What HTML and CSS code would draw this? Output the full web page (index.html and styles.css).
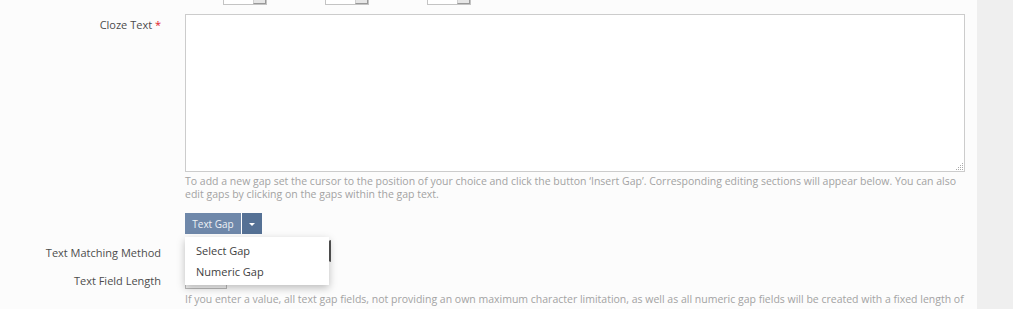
FILE: index.html
```html
<!DOCTYPE html>
<html lang="en">
<head>
    <meta charset="UTF-8">
    <title>Cloze Question</title>
    <link rel="stylesheet" href="styles.css">
</head>
<body>
    <div class="page">
        <div class="main">
            <form class="form">
                <div class="form-row top-row">
                    <label class="form-label">Scoring</label>
                    <div class="form-field spin-group">
                        <span class="spin"><input type="text"><span class="spin-btn"></span></span>
                        <span class="spin"><input type="text"><span class="spin-btn"></span></span>
                        <span class="spin"><input type="text"><span class="spin-btn"></span></span>
                    </div>
                </div>

                <div class="form-row cloze-row">
                    <label class="form-label">Cloze Text <span class="required">*</span></label>
                    <div class="form-field">
                        <div class="textarea-wrap">
                            <textarea class="cloze-text"></textarea>
                            <svg class="grip" width="9" height="9" viewBox="0 0 9 9">
                                <g fill="#aaa">
                                    <rect x="7" y="1" width="1" height="1"/>
                                    <rect x="5" y="3" width="1" height="1"/>
                                    <rect x="7" y="3" width="1" height="1"/>
                                    <rect x="3" y="5" width="1" height="1"/>
                                    <rect x="5" y="5" width="1" height="1"/>
                                    <rect x="7" y="5" width="1" height="1"/>
                                    <rect x="1" y="7" width="1" height="1"/>
                                    <rect x="3" y="7" width="1" height="1"/>
                                    <rect x="5" y="7" width="1" height="1"/>
                                    <rect x="7" y="7" width="1" height="1"/>
                                </g>
                            </svg>
                        </div>
                        <div class="help-text">To add a new gap set the cursor to the position of your choice and click the button ‘Insert Gap’. Corresponding editing sections will appear below. You can also edit gaps by clicking on the gaps within the gap text.</div>
                        <div class="btn-group">
                            <button type="button" class="btn btn-main">Text Gap</button><button type="button" class="btn btn-caret"><span class="caret"></span></button>
                            <ul class="dropdown-menu">
                                <li><a href="#">Select Gap</a></li>
                                <li><a href="#">Numeric Gap</a></li>
                            </ul>
                        </div>
                    </div>
                </div>

                <div class="form-row match-row">
                    <label class="form-label">Text Matching Method</label>
                    <div class="form-field">
                        <div class="select"></div>
                    </div>
                </div>

                <div class="form-row length-row">
                    <label class="form-label">Text Field Length</label>
                    <div class="form-field">
                        <input type="text" class="small-input">
                        <div class="help-text">If you enter a value, all text gap fields, not providing an own maximum character limitation, as well as all numeric gap fields will be created with a fixed length of</div>
                    </div>
                </div>
            </form>
        </div>
        <div class="side"></div>
    </div>
</body>
</html>
```

FILE: styles.css
```css
body {
    margin: 0;
    font-family: "Open Sans", Arial, sans-serif;
    background-color: #fcfcfc;
    color: #4c4c4c;
    overflow: hidden;
}
.page {
    display: flex;
    height: 309px;
}
.main {
    width: 977px;
    background-color: #fcfcfc;
}
.side {
    flex: 1;
    background-color: #efefef;
}
.form-row {
    display: grid;
    grid-template-columns: 161px 780px;
    column-gap: 24px;
}
.form-label {
    text-align: right;
    font-size: 11px;
    line-height: 16px;
}
.required {
    color: #e2202a;
}
.top-row {
    margin-top: -16px;
    height: 30px;
}
.spin-group {
    display: flex;
    gap: 58px;
    padding-left: 38px;
}
.spin {
    display: flex;
    width: 44px;
    height: 21px;
    border: 1px solid #c4c4c4;
    background: #fff;
    box-sizing: border-box;
}
.spin input {
    width: 29px;
    border: none;
    padding: 0;
    background: transparent;
}
.spin-btn {
    flex: 1;
    background: #e6e6e6;
    border-left: 1px solid #d0d0d0;
    border-right: 1px solid #999;
    border-bottom: 1px solid #999;
}
.cloze-row .form-label {
    padding-top: 3px;
}
.textarea-wrap {
    position: relative;
}
.cloze-text {
    display: block;
    width: 780px;
    height: 158px;
    border: 1px solid #ccc;
    background: #fff;
    box-sizing: border-box;
    margin: 0;
    resize: none;
}
.grip {
    position: absolute;
    right: 1px;
    bottom: 1px;
}
.help-text {
    font-size: 10.5px;
    line-height: 13px;
    color: #a3a3a3;
    margin-top: 3px;
}
.btn-group {
    position: relative;
    display: flex;
    margin-top: 12px;
}
.btn {
    border: none;
    height: 21px;
    padding: 0;
    color: #eef1f6;
    font-family: "Open Sans", Arial, sans-serif;
    font-size: 10px;
    cursor: pointer;
}
.btn-main {
    width: 57px;
    background-color: #6f88aa;
    border-right: 1px solid #fff;
}
.btn-caret {
    width: 20px;
    background-color: #557195;
}
.caret {
    display: inline-block;
    border-top: 3px solid #fff;
    border-left: 3px solid transparent;
    border-right: 3px solid transparent;
    vertical-align: middle;
}
.dropdown-menu {
    position: absolute;
    top: 24px;
    left: 0;
    z-index: 10;
    width: 144px;
    margin: 0;
    padding: 3px 0;
    list-style: none;
    background: #fff;
    box-shadow: 0 3px 8px rgba(0,0,0,0.25);
}
.dropdown-menu a {
    display: block;
    padding: 0 11px;
    font-size: 11px;
    line-height: 21px;
    color: #3e3e3e;
    text-decoration: none;
}
.match-row {
    margin-top: 6px;
}
.match-row .form-label {
    padding-top: 5px;
}
.select {
    width: 146px;
    height: 22px;
    border: 1px solid #ccc;
    border-right: 2px solid #555;
    background: #fff;
    box-sizing: border-box;
}
.length-row {
    margin-top: 7px;
}
.length-row .form-label {
    padding-top: 4px;
}
.small-input {
    display: block;
    width: 42px;
    height: 20px;
    border: 1px solid #bbb;
    background: #f4f4f4;
    box-sizing: border-box;
    margin: 0;
}
.length-row .help-text {
    margin-top: 4px;
}
```
